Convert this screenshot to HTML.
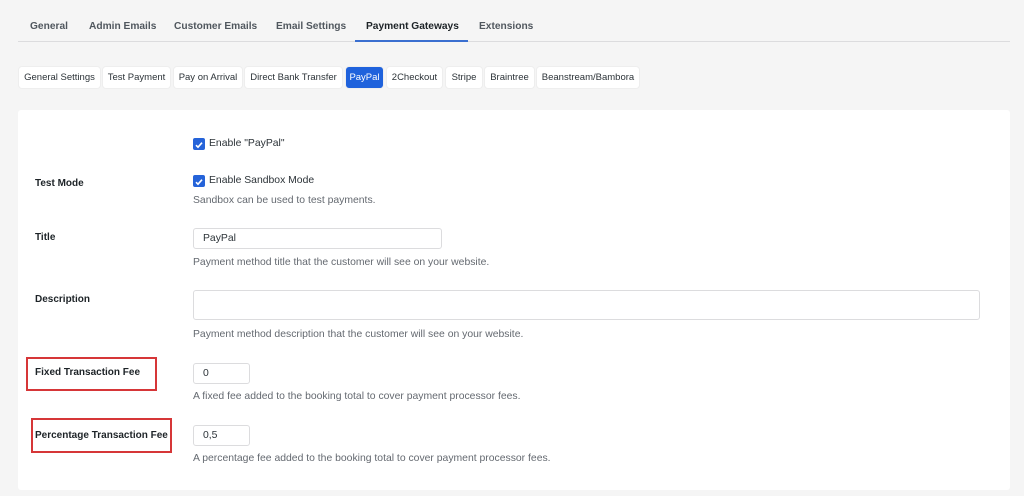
<!DOCTYPE html>
<html><head><style>
body{margin:0;width:1024px;height:496px;background:#f5f5f5;font-family:"Liberation Sans",sans-serif;position:relative;overflow:hidden;color:#1d2327}
.a{position:absolute;white-space:nowrap}
.tab{font-size:10.2px;font-weight:bold;color:#50575e;top:21px}
.btn{position:absolute;top:67px;height:21px;background:#fff;border-radius:3px;font-size:9.5px;line-height:21px;text-align:center;color:#2c3338;box-shadow:0 0 0 1px #eee}
.lbl{font-size:10px;font-weight:bold;color:#1d2327}
.help{font-size:10.4px;color:#646970}
.inp{position:absolute;background:#fff;border:1px solid #dcdcde;border-radius:3px;box-sizing:border-box;font-size:10.4px;line-height:19px;padding-left:9px;color:#2c3338}
.cb{position:absolute;width:12px;height:12px;background:#2563d9;border-radius:2px}
.red{position:absolute;border:2px solid #d63638;box-sizing:border-box}
</style></head><body>
<div class="a tab" style="left:30px">General</div>
<div class="a tab" style="left:89px">Admin Emails</div>
<div class="a tab" style="left:174px">Customer Emails</div>
<div class="a tab" style="left:276px">Email Settings</div>
<div class="a tab" style="left:366px;color:#1d2327">Payment Gateways</div>
<div class="a tab" style="left:479px">Extensions</div>
<div class="a" style="left:18px;top:41px;width:992px;height:1px;background:#dcdcde"></div>
<div class="a" style="left:355px;top:40px;width:113px;height:2px;background:#3a6fd0"></div>

<div class="btn" style="left:19px;width:81px">General Settings</div>
<div class="btn" style="left:103px;width:67px">Test Payment</div>
<div class="btn" style="left:174px;width:68px">Pay on Arrival</div>
<div class="btn" style="left:245px;width:97px">Direct Bank Transfer</div>
<div class="btn" style="left:346px;width:37px;background:#1f62dc;color:#fff">PayPal</div>
<div class="btn" style="left:387px;width:55px">2Checkout</div>
<div class="btn" style="left:446px;width:36px">Stripe</div>
<div class="btn" style="left:485px;width:49px">Braintree</div>
<div class="btn" style="left:537px;width:102px">Beanstream/Bambora</div>

<div class="a" style="left:18px;top:110px;width:992px;height:380px;background:#fff;border-radius:3px"></div>

<div class="cb" style="left:193px;top:138px"><svg width="12" height="12"><path d="M3 6.2l2 2 4-4.5" stroke="#fff" stroke-width="1.6" fill="none"/></svg></div>
<div class="a" style="left:209px;top:138px;font-size:10.4px;color:#2c3338">Enable "PayPal"</div>

<div class="a lbl" style="left:35px;top:178px">Test Mode</div>
<div class="cb" style="left:193px;top:175px"><svg width="12" height="12"><path d="M3 6.2l2 2 4-4.5" stroke="#fff" stroke-width="1.6" fill="none"/></svg></div>
<div class="a" style="left:209px;top:175px;font-size:10.4px;color:#2c3338">Enable Sandbox Mode</div>
<div class="a help" style="left:193px;top:195px">Sandbox can be used to test payments.</div>

<div class="a lbl" style="left:35px;top:232px">Title</div>
<div class="inp" style="left:193px;top:228px;width:249px;height:21px">PayPal</div>
<div class="a help" style="left:193px;top:257px">Payment method title that the customer will see on your website.</div>

<div class="a lbl" style="left:35px;top:294px">Description</div>
<div class="inp" style="left:193px;top:290px;width:787px;height:30px"></div>
<div class="a help" style="left:193px;top:329px">Payment method description that the customer will see on your website.</div>

<div class="red" style="left:26px;top:357px;width:131px;height:34px"></div>
<div class="a lbl" style="left:35px;top:367px">Fixed Transaction Fee</div>
<div class="inp" style="left:193px;top:363px;width:57px;height:21px">0</div>
<div class="a help" style="left:193px;top:391px">A fixed fee added to the booking total to cover payment processor fees.</div>

<div class="red" style="left:31px;top:418px;width:141px;height:35px"></div>
<div class="a lbl" style="left:35px;top:430px">Percentage Transaction Fee</div>
<div class="inp" style="left:193px;top:425px;width:57px;height:21px">0,5</div>
<div class="a help" style="left:193px;top:453px">A percentage fee added to the booking total to cover payment processor fees.</div>
</body></html>
